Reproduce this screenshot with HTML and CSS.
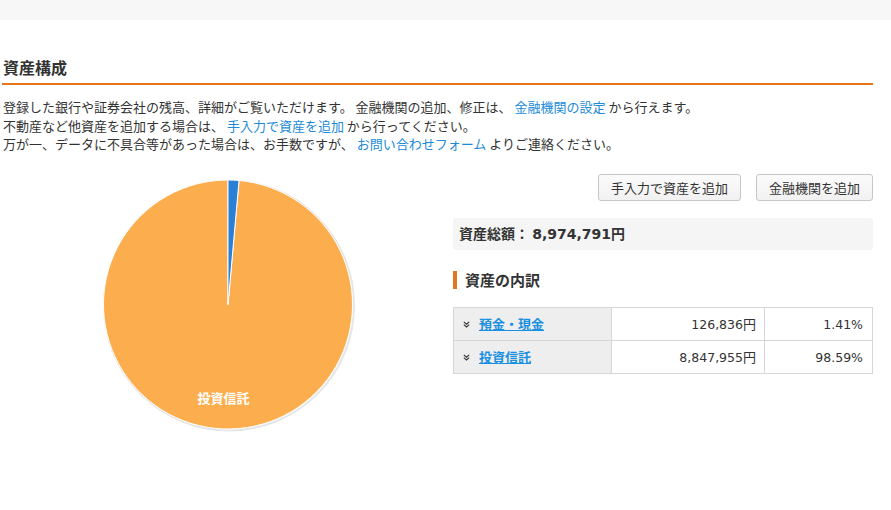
FILE: index.html
```html
<!DOCTYPE html>
<html lang="ja">
<head>
<meta charset="utf-8">
<title>資産構成</title>
<link rel="stylesheet" href="styles.css">
</head>
<body>
<div class="topbar"></div>
<div class="page">
  <h2 class="title">資産構成</h2>
  <p class="intro">登録した銀行や証券会社の残高、詳細がご覧いただけます。 金融機関の追加、修正は、 <a href="#">金融機関の設定</a> から行えます。<br>不動産など他資産を追加する場合は、 <a href="#">手入力で資産を追加</a> から行ってください。<br>万が一、データに不具合等があった場合は、お手数ですが、 <a href="#">お問い合わせフォーム</a> よりご連絡ください。</p>
  <div class="main">
    <div class="chart-col">
      <svg class="pie" width="254" height="254" viewBox="0 0 254 254">
        <circle cx="128" cy="127.5" r="125" fill="none" stroke="rgba(0,0,0,0.10)" stroke-width="2"/>
        <path d="M127,126.5 L138.02,2.49 A124.5,124.5 0 1,1 127,2 Z" fill="#fcae4e" stroke="#fff" stroke-width="1"/>
        <path d="M127,126.5 L127,2 A124.5,124.5 0 0,1 138.02,2.49 Z" fill="#2a7fd6" stroke="#fff" stroke-width="1"/>
        <text class="pie-label" x="122.5" y="224.5" text-anchor="middle">投資信託</text>
      </svg>
    </div>
    <div class="side-col">
      <div class="actions">
        <button class="btn">手入力で資産を追加</button>
        <button class="btn">金融機関を追加</button>
      </div>
      <div class="total">資産総額： <span class="num">8,974,791</span>円</div>
      <h3 class="subhead">資産の内訳</h3>
      <table class="breakdown">
        <tr>
          <th><span class="chev"><svg width="7" height="7" viewBox="0 0 7 7"><path d="M0.8,0.8 L3.5,3.2 L6.2,0.8 M0.8,3.6 L3.5,6 L6.2,3.6" fill="none" stroke="#333" stroke-width="1.1"/></svg></span><a href="#">預金・現金</a></th>
          <td class="amt"><span class="num">126,836</span>円</td>
          <td class="pct"><span class="num">1.41%</span></td>
        </tr>
        <tr>
          <th><span class="chev"><svg width="7" height="7" viewBox="0 0 7 7"><path d="M0.8,0.8 L3.5,3.2 L6.2,0.8 M0.8,3.6 L3.5,6 L6.2,3.6" fill="none" stroke="#333" stroke-width="1.1"/></svg></span><a href="#">投資信託</a></th>
          <td class="amt"><span class="num">8,847,955</span>円</td>
          <td class="pct"><span class="num">98.59%</span></td>
        </tr>
      </table>
    </div>
  </div>
</div>
</body>
</html>
```

FILE: styles.css
```css
html, body {
  margin: 0;
  padding: 0;
  background: #fff;
}
body {
  font-family: "Noto Sans CJK JP", "Noto Sans", sans-serif;
  color: #333;
  font-size: 13px;
}
.topbar {
  height: 20px;
  background: #f7f7f7;
}
.page {
  margin: 0 18px 0 2px;
}
.title {
  margin: 37px 0 0 0;
  padding: 0 0 6px 1px;
  font-size: 16px;
  line-height: 20px;
  font-weight: bold;
  color: #333;
  border-bottom: 2px solid #e5761b;
}
.intro {
  margin: 13px 0 0 1px;
  line-height: 18.5px;
  font-size: 13px;
}
.intro a {
  color: #1c8ad6;
  text-decoration: none;
}
.main {
  display: flex;
  margin-top: 20px;
}
.chart-col {
  width: 451px;
  display: flex;
  justify-content: center;
  padding-top: 4px;
}
.pie {
  display: block;
}
.pie-label {
  font-family: "Noto Sans CJK JP", sans-serif;
  font-size: 13px;
  font-weight: bold;
  fill: #fff;
}
.side-col {
  width: 420px;
}
.actions {
  display: flex;
  justify-content: flex-end;
  gap: 15px;
}
.btn {
  height: 27px;
  padding: 0 12px;
  border: 1px solid #c6c6c6;
  border-radius: 3px;
  background: linear-gradient(#fbfbfb, #f1f1f1);
  font-family: "Noto Sans CJK JP", sans-serif;
  font-size: 13px;
  color: #333;
}
.total {
  margin-top: 17px;
  height: 32px;
  line-height: 31px;
  background: #f5f5f5;
  border-radius: 3px;
  padding-left: 6px;
  font-size: 14px;
  font-weight: bold;
  color: #333;
}
.num {
  font-family: "DejaVu Sans", "Noto Sans CJK JP", sans-serif;
}
.total .num {
  font-size: 14px;
}
.subhead {
  margin: 21px 0 0 0;
  border-left: 4px solid #e5761b;
  padding-left: 8px;
  height: 18px;
  line-height: 18px;
  font-size: 15px;
  font-weight: bold;
  color: #333;
}
.breakdown {
  margin-top: 18px;
  width: 420px;
  border-collapse: collapse;
  table-layout: fixed;
  font-size: 13px;
}
.breakdown th,
.breakdown td {
  border: 1px solid #d6d6d6;
  height: 32px;
  padding: 0;
}
.breakdown th {
  width: 148px;
  background: #eeeeee;
  text-align: left;
  font-weight: bold;
  padding-left: 9px;
}
.breakdown th a {
  color: #1a90e0;
  text-decoration: underline;
}
.breakdown td .num {
  font-size: 12.5px;
}
.chev {
  display: inline-block;
  width: 7px;
  margin-right: 9px;
  vertical-align: 1px;
}
.chev svg {
  display: block;
}
.amt {
  width: 144px;
  text-align: right;
  padding-right: 8px !important;
}
.pct {
  text-align: right;
  padding-right: 9px !important;
}
```
